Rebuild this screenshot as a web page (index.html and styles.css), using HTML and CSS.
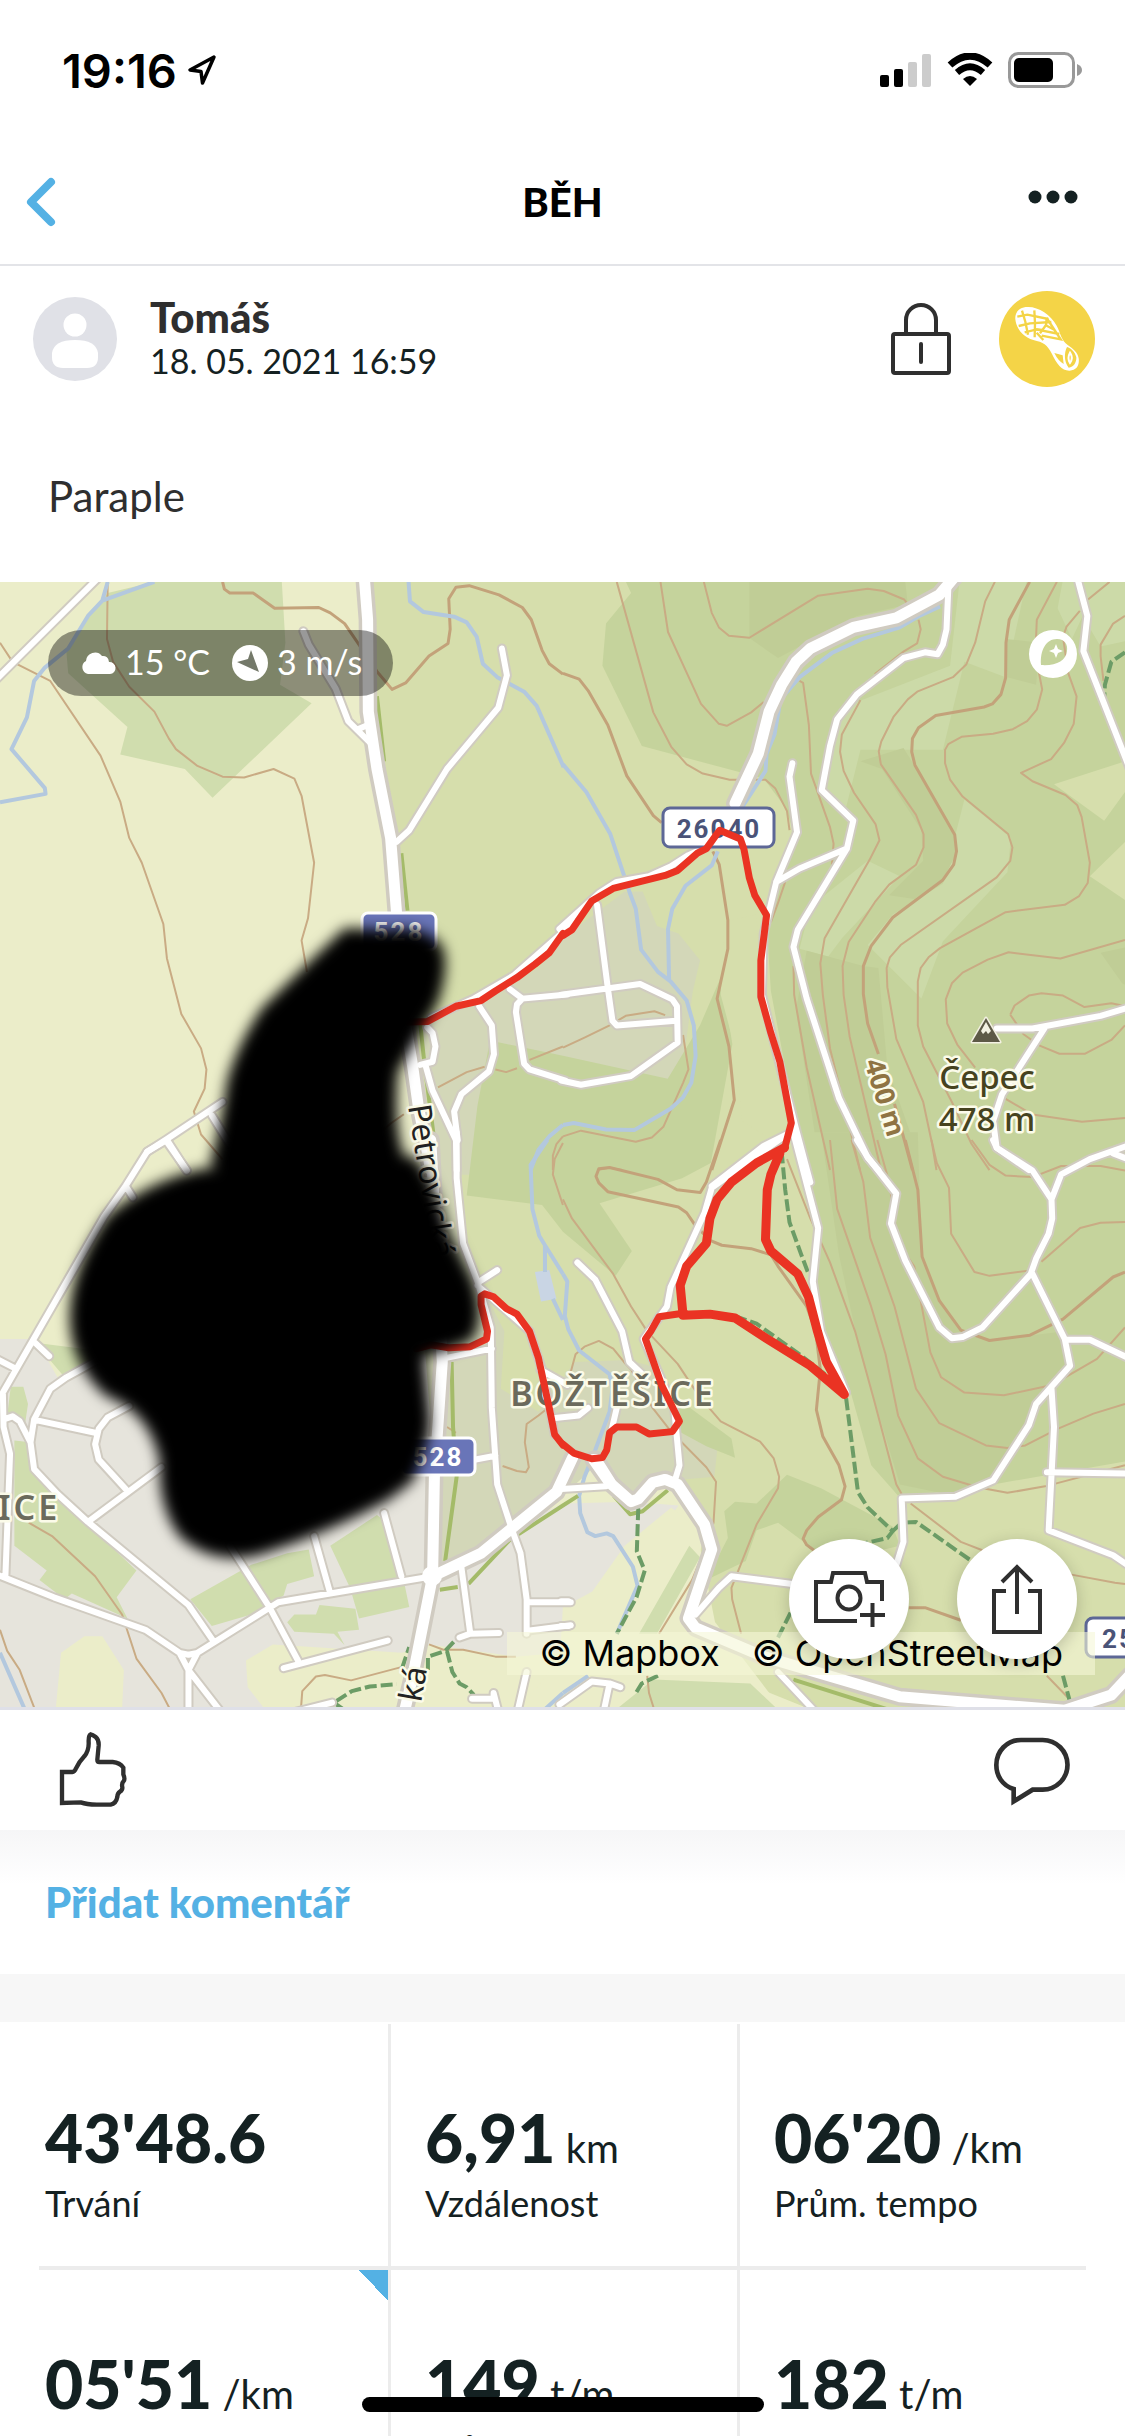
FILE: index.html
```html
<!DOCTYPE html>
<html lang="cs">

<head>
<meta charset="UTF-8">
<meta name="viewport" content="width=device-width, initial-scale=1">
<title>Běh</title>
<link rel="stylesheet" href="styles.css">
</head>

<body>
<div class="statusbar">
  <div class="clock">
    <span>19:16</span>
    <svg width="30" height="32" viewBox="0 0 30 32"><path d="M27 3 L3 16 L14 17.500 L15.500 29Z" fill="none" stroke="#000" stroke-width="3.500" stroke-linejoin="round"/></svg>
  </div>
  <div class="indicators">
    <svg width="52" height="34" viewBox="0 0 52 34">
      <rect x="0" y="22" width="9" height="12" rx="2"/>
      <rect x="14" y="16" width="9" height="18" rx="2"/>
      <rect x="28" y="9" width="9" height="25" rx="2" fill="#ccc"/>
      <rect x="42" y="1" width="9" height="33" rx="2" fill="#ccc"/>
    </svg>
    <svg width="46" height="34" viewBox="0 0 46 34">
      <path d="M3 12 Q23 -6 43 12" fill="none" stroke="#000" stroke-width="7"/>
      <path d="M10 19.500 Q23 8 36 19.500" fill="none" stroke="#000" stroke-width="6.500"/>
      <path d="M16 26 Q23 20 30 26 L23 33Z"/>
    </svg>
    <svg width="75" height="36" viewBox="0 0 75 36">
      <rect x="1.500" y="1.500" width="64" height="33" rx="9" fill="none" stroke="#999" stroke-width="3"/>
      <path d="M69 12 Q74 14 74 18 T69 24Z" fill="#999"/>
      <rect x="6" y="6" width="39" height="24" rx="5"/>
    </svg>
  </div>
</div>

<header class="navbar">
  <button class="nav-btn" aria-label="Zpět">
    <svg width="30" height="50" viewBox="0 0 30 50"><path d="M25 5 L5 25 L25 45" fill="none" stroke="#54b1e4" stroke-width="8" stroke-linecap="round" stroke-linejoin="round"/></svg>
  </button>
  <h1 class="title">BĚH</h1>
  <button class="nav-btn nav-more" aria-label="Více">
    <svg width="50" height="26" viewBox="0 0 50 26"><g fill="#142122"><circle cx="7" cy="8" r="6.500"/><circle cx="25" cy="8" r="6.500"/><circle cx="43" cy="8" r="6.500"/></g></svg>
  </button>
</header>

<section class="profile">
  <svg width="84" height="84" viewBox="0 0 84 84">
    <circle cx="42" cy="42" r="42" fill="#e0e1e7"/>
    <circle cx="42" cy="28" r="11.500" fill="#fff"/>
    <path d="M19 56 Q21 43 42 43 T65 56 V60 Q65 71 54 71 H30 Q19 71 19 60Z" fill="#fff"/>
  </svg>
  <div class="who">
    <div class="name">Tomáš</div>
    <div class="date">18. 05. 2021 16:59</div>
  </div>
  <svg width="60" height="72" viewBox="0 0 60 72">
    <g fill="none" stroke="#2f2f2f" stroke-width="4">
      <rect x="2" y="31" width="56" height="39" rx="2"/>
      <path d="M15 31 V17 A15 15 0 0 1 45 17 V31"/>
      <path d="M30 41 V59" stroke-linecap="round"/>
    </g>
  </svg>
  <svg class="sport" width="96" height="96" viewBox="417 33 288 288">
    <circle cx="561" cy="177" r="144" fill="#f4d447"/>
    <path fill="#fff" d="M503 81 C480 81 464 95 466 118 C469 148 492 172 520 180 C550 187 562 194 576 222 C590 252 606 273 629 272 C650 271 659 255 656 235 C653 216 638 206 624 196 C603 180 602 160 590 137 C572 104 535 80 503 81Z"/>
    <g fill="none" stroke="#f4d447" stroke-width="7">
      <path d="M486 92 L496 125 L504 164 M523 91 L525 130 L524 172 M560 114 L558 135 L540 160"/>
      <path d="M472 110 L502 104 L565 117 M476 138 L510 130 L574 126 M494 157 L530 148 L548 150"/>
      <path d="M560 114 L602 178 L545 167 M528 148 L598 162 M556 135 L584 150 M530 158 L550 180"/>
    </g>
    <path fill="#f4d447" d="M583 219 L608 226 L611 252 Q594 242 583 219Z M621 201 C633 205 644 214 649 232 C650 246 641 263 626 263 C612 245 612 218 621 201Z"/>
    <path fill="none" stroke="#fff" stroke-width="6" d="M630 218 Q621 234 630 249 Q641 234 630 218Z"/>
  </svg>
</section>

<p class="note">Paraple</p>

<section class="map">
<svg class="map-art" viewBox="0 0 1125 1125">
<defs>
  <filter id="soft" x="-20%" y="-20%" width="140%" height="140%"><feGaussianBlur stdDeviation="7"/></filter>
  <g id="main-roads">
    <path transform="translate(0 -12) scale(.359 .3827)" d="M1014 10 L1024 130 1026 370 1050 520 1088 700 1105 900 1115 1100 1150 1300 1165 1400 1200 1568"/>
    <path transform="translate(0 558) scale(.359 .3827)" d="M1200 0 L1232 580 1210 880 1205 1140 1150 1400 1125 1500 M1205 1140 L1340 1080 1425 1015 1550 920 1595 830 M1660 835 L1700 895"/>
    <path transform="translate(563 -12) scale(.3584 .3827)" d="M1100 10 L1050 65 930 125 810 150 690 205 650 240 610 300 575 370 545 480 480 610"/>
    <path transform="translate(563 558) scale(.3584 .3827)" d="M85 835 L130 895 190 945 210 938 250 895 285 887 320 900 395 1005 415 1070 350 1250 370 1275 560 1350 940 1455 1400 1490 1530 1450 1580 1400"/>
  </g>
  <g id="side-roads">
    <path transform="translate(0 -12) scale(.359 .3827)" d="M1600 920 L1430 1060 1320 1120 1200 1170 M1398 205 L1412 275 1388 360 1245 520 1140 680 1105 710 M845 160 L860 195 935 310 970 395 1035 455 M1000 415 L1025 405 M285 10 L-20 295 M1580 1109 L1455 1120 1440 1135 1437 1155 1460 1290 1475 1305 1575 1334 M1455 1120 L1420 1095 M1335 1140 L1370 1190 1376 1265 1362 1310 1285 1370 1265 1415 1275 1490 M1190 1195 L1205 1210 1213 1245 1205 1285 1170 1293 M1185 1293 L1205 1360 1270 1490 1272 1568 M620 1390 L465 1487 410 1520 M465 1495 L520 1568 M590 1425 L640 1500"/>
    <path transform="translate(0 558) scale(.359 .3827)" d="M465 0 L410 30 350 120 290 200 8 660 10 750 28 820 15 1140 M465 0 L520 80 M350 120 L370 150 M98 530 L137 565 M-10 572 L45 598 M10 730 L35 722 55 735 85 790 95 860 160 925 245 998 525 1215 595 1310 M85 790 L95 730 140 650 185 620 360 530 M100 732 L265 765 M360 695 L300 725 275 755 265 795 275 835 350 912 M245 998 L450 855 M-10 1135 L150 1195 405 1280 500 1340 525 1345 550 1340 775 1208 1205 1140 M500 1340 L525 1385 V1500 M550 1340 L525 1385 620 1500 M640 1060 L750 1220 830 1360 M790 1380 L1080 1308 M875 1035 L920 1185 M1070 975 L1118 1140 M1272 -20 V100 L1290 270 1330 370 1367 490 1370 700 1385 900 1425 1015 1450 1080 1467 1200 V1290 M1335 370 L1385 340 M1330 380 L1475 500 1510 600 1545 770 M1240 570 L1370 545 M1325 835 L1380 825 M1285 1115 L1310 1290 M1280 1300 L1310 1290 1390 1288 M1467 1208 H1590 M1470 1282 L1590 1268 M1467 1390 L1440 1500 M1315 1460 H1375 V1445 L1390 1500 M820 1495 L925 1470 M1505 600 L1580 640 M1540 727 L1612 720 1638 700"/>
    <path transform="translate(563 -12) scale(.3584 .3827)" d="M420 715 L350 745 300 775 240 800 150 815 100 845 -10 938 M1075 50 L1070 155 1060 195 1045 220 1010 215 950 230 820 325 765 390 745 460 722 575 810 655 792 728 655 940 643 985 680 1120 770 1380 850 1535 880 1568 M640 505 L632 540 653 685 595 815 560 950 555 1110 650 1460 690 1600 M792 728 L660 780 595 815 M1432 10 L1463 120 1452 212 1590 540 M1210 1198 L1310 1198 1500 1165 1590 1140 M1345 1195 L1225 1370 1200 1440 1210 1510 1300 1568 M95 875 L125 1092 138 1178 150 1190 315 1178 M-5 1110 L215 1082 305 1122 318 1140 320 1235 190 1322 50 1345 -5 1334 M645 1465 L560 1505 415 1610"/>
    <path transform="translate(563 558) scale(.3584 .3827)" d="M645 -10 L712 230 697 370 720 500 790 660 M610 -5 L415 125 395 190 300 385 290 435 225 520 310 700 325 850 312 890 M40 320 L90 365 165 500 185 580 230 620 M820 0 L850 45 930 140 915 218 955 315 1050 490 1085 518 1115 515 1170 490 1305 350 1320 310 1355 245 1365 205 1363 155 1390 90 1470 50 1590 10 M1200 0 L1210 20 1310 80 1363 155 M1535 35 L1590 55 M1310 350 L1400 520 1415 590 1320 690 1300 745 1200 890 1095 932 945 937 950 1050 930 1110 M1405 522 H1470 L1590 575 M1363 650 L1370 750 1355 1020 1535 1085 1590 1120 M1350 868 L1590 872 M370 1240 L435 1170 470 1140 640 1160 M-5 912 L120 905 M150 700 L135 760 M-5 1205 H15 M-5 1270 H15 M600 1390 L710 1500 M160 1430 L130 1420 80 1415 -10 1475 M130 1420 L112 1500"/>
  </g>
</defs>

<!-- land cover -->
<rect width="1125" height="1125" fill="#ebedc9"/>
<path class="meadow" d="M363 0 L370 140 392 260 412 470 440 700 440 950 563 870 690 915 715 1040 780 1125 H1125 V0Z"/>
<path class="town" transform="translate(0 558) scale(.359 .3827)" d="M0 520 H100 L160 620 220 580 1200 560 1230 1110 1425 1015 1568 950 1760 945 1890 955 1840 1020 1735 1070 1650 1185 1568 1220 1560 1340 1437 1350 1195 1318 1120 1340 760 1318 685 1360 690 1430 740 1490 H0Z"/>
<path class="park" transform="translate(0 -12) scale(.359 .3827)" d="M300 60 L430 31 H785 L795 190 780 300 868 348 592 595 515 520 335 482 355 410 190 270 185 215 215 160 250 120Z"/>
<path class="estate" transform="translate(0 -12) scale(.359 .3827)" d="M1160 1180 L1400 1090 1500 1040 1568 960 1655 900 1740 840 1790 840 1830 930 1890 950 1950 1020 1930 1100 1900 1310 1860 1380 1785 1390 1568 1330 1365 1310 1310 1580 H1220Z"/>
<g transform="translate(0 558) scale(.359 .3827)">
  <path class="estate" d="M1205 0 H1310 L1285 90 1285 270 1340 380 1405 500 1395 650 1500 710 1600 580 1750 575 1810 590 1900 720 2000 790 1990 880 1870 890 1760 945 1660 850 1568 930 1425 1015 1230 1110 1180 500Z"/>
  <path class="park" d="M30 645 L65 645 78 690 70 740 20 720Z M40 785 L85 790 95 870 240 1000 380 1125 325 1195 355 1250 200 1185 180 1200 110 1150 130 1125 40 1060Z M530 1200 L700 1110 800 1080 860 1070 875 1140 800 1160 790 1190 700 1240 590 1270Z M920 1060 L1050 980 1080 1000 1120 1130 1140 1220 1000 1250 975 1170Z M800 1260 L820 1240 880 1240 890 1215 990 1225 1000 1280 940 1285 960 1320 930 1290 820 1285Z M98 530 L350 560 180 620Z"/>
  <path fill="#ebedc9" d="M170 1340 L235 1297 H285 L345 1385 340 1490 H155Z M1570 1220 L1650 1180 1740 1060 1870 960 1960 1030 1915 1250 1850 1290 H1568Z M1560 1350 L2000 1390 2290 1500 H1440Z"/>
  <path class="park" d="M1820 1410 L2090 1420 2180 1500 H1700Z M1830 1290 L1780 1290 1920 1060 1950 1090Z"/>
  <path fill="#c9d5e4" d="M1490 345 L1530 340 1550 415 1507 422Z"/>
  <path class="forest" d="M1330 -90 L1365 -260 1568 -220 1860 -160 1950 -300 2010 -430 2040 -250 1980 60 1900 100 1670 165 1760 290 1715 355 1568 240 1510 170 1300 145Z"/>
</g>
<g transform="translate(563 -12) scale(.3584 .3827)">
  <path class="forest" d="M160 0 L190 60 120 140 110 250 220 460 340 490 560 545 620 620 650 700 600 800 570 950 580 1100 640 1400 700 1580 H1600 V0Z"/>
  <path class="forest-light" d="M1110 0 L1080 250 820 345 770 400 720 560 790 620 830 470 1060 470 1120 240 1235 280 1300 0Z M1120 600 L1250 700 1240 790 1060 970 1000 1120 850 980 920 900 1060 820Z M690 880 L850 760 940 800 780 960 740 1010 660 990Z M1400 0 H1600 V180 L1500 200 1450 120 1420 180 1380 100Z"/>
  <path class="forest-dark" d="M520 31 H955 L962 90 820 120 690 185 600 230 520 178Z M830 500 L950 465 1000 540 1093 692 1098 740 1060 810 980 860 910 850 1005 760 1000 680 890 520Z M680 995 L838 1035 880 1040 905 1300 1010 1580 H720 L650 1150Z M1235 180 L1330 190 1320 300 1240 280Z M1500 1000 L1600 980 V1100 L1560 1080Z"/>
  <path class="meadow" d="M1370 560 L1568 500 V580 L1510 655Z M1470 800 L1580 700 V870Z M450 920 L540 900 550 1110 600 1300 600 1500 500 1440 480 1250 440 1110Z"/>
</g>
<g transform="translate(563 558) scale(.3584 .3827)">
  <path class="forest" d="M640 -20 L712 230 700 370 730 520 800 650 860 850 940 935 1200 900 1568 840 1600 840 V-20Z M450 970 L480 945 540 950 625 875 720 910 920 1010 940 1060 850 1080 700 1070 600 1000 540 1020 510 1100 400 1150 460 1040Z M280 655 L340 690 470 780 480 830 400 800 320 760Z"/>
  <path class="forest-dark" d="M720 -20 H990 L1000 300 1050 420 1110 497 1190 524 1400 500 1410 590 1300 720 1200 890 1095 930 940 900 830 560 770 300Z"/>
</g>

<g class="contour">
  <path transform="translate(0 -12) scale(.359 .3827)" d="M0 190 L35 240 140 290 280 485 335 605 360 700 395 765 455 925 465 1015 505 1160 560 1250 575 1305 570 1355 540 1415 560 1475 620 1540 M300 31 L298 180 315 240 360 305 430 370 470 440 490 468 550 512 620 540 680 542 762 520 820 545 840 590 875 765 858 910 840 968 855 1050 M1220 1352 L1300 1312 1350 1298 M1380 1305 L1410 1312 1440 1302 M1475 1280 L1568 1245 M1000 1490 L1035 1488 1090 1445 1125 1422 M1568 1480 L1550 1500 1540 1530 1540 1568"/>
  <path transform="translate(563 -12) scale(.3584 .3827)" d="M150 31 L252 372 302 462 345 508 390 532 465 548 565 548 592 570 625 630 632 680 M272 31 L293 162 385 350 435 402 457 407 525 372 560 345 M393 31 L415 112 435 150 463 172 520 177 712 67 850 49 895 55 952 77 962 90 M992 130 L998 155 988 192 952 212 870 272 M660 290 L670 295 686 405 692 532 745 672 755 715 750 770 M620 815 L600 870 580 920 M830 340 L778 430 773 475 783 525 812 582 872 664 883 706 855 758 730 962 718 1028 725 1110 745 1250 829 1568 M1205 31 L1178 82 1150 190 1125 247 1088 280 990 317 962 338 922 384 888 448 881 474 887 508 985 640 1006 690 1006 725 985 770 910 822 870 868 797 972 780 1035 783 1110 800 1220 870 1500 887 1568 M1378 31 L1322 130 1318 220 1337 312 1322 365 1295 395 1255 416 1200 428 1112 436 1075 455 1066 470 1066 505 1080 548 1115 592 1242 690 1254 725 1248 760 1210 803 942 980 912 1012 903 1040 905 1090 930 1225 1005 1390 1030 1500 1042 1568 M1525 31 L1465 77 M1442 107 L1405 148 1395 175 1410 270 1433 330 1425 402 1398 452 1362 494 1278 530 1310 552 1402 588 1435 615 1447 645 1470 765 1464 818 1440 852 1400 875 1235 894 1052 988 1020 1012 998 1040 990 1075 990 1190 1005 1245 1085 1390 1140 1500 1190 1568 M1568 120 L1535 140 1500 195 1500 225 1508 290 M1568 967 L1388 1015 1243 999 1185 1018 1115 1052 1085 1080 1068 1122 1072 1185 1100 1240 1150 1300 M1235 1382 L1310 1423 1448 1442 1568 1432 M1248 1162 L1260 1138 1300 1112 1335 1106 1395 1112 1455 1142 1530 1132 1560 1138 M1568 1190 L1530 1228 1457 1264 1385 1264 1330 1243 1285 1213 1248 1162 M643 1035 L645 1110 680 1300 745 1568 M0 1248 L60 1222 130 1190 175 1165 255 1153 285 1163 M335 1215 L350 1305 335 1340 280 1455 248 1483 203 1494 50 1465 0 1480 M95 1568 L130 1562 165 1568"/>
  <path transform="translate(0 558) scale(.359 .3827)" d="M80 1000 L145 1035 265 1140 340 1240 380 1355 450 1445 475 1490 M0 1280 L20 1335 55 1385 98 1490 M838 1490 L842 1440 880 1402 905 1398 978 1412 1115 1378 M1195 1318 L1235 1332 1290 1332 1380 1350 1437 1350 M1520 705 L1500 720 1467 742 1462 790 1473 855 1465 868 1440 865 1400 852 M1568 8 L1545 50 1540 90 1568 170 M1245 750 L1270 765"/>
  <path transform="translate(563 558) scale(.3584 .3827)" d="M0 155 L25 205 140 350 190 435 235 500 320 585 380 670 440 735 550 788 588 832 603 880 600 910 540 1005 470 1170 472 1200 497 1290 M22 605 L35 560 60 540 100 525 140 545 170 580 190 600 250 700 300 760 400 855 427 893 420 1000 400 1060 360 1150 268 1290 M625 50 L690 205 745 320 815 500 868 680 930 900 945 925 M745 0 L765 180 858 430 900 560 935 720 990 832 1060 880 1160 908 1240 922 1345 905 1568 850 M805 0 L838 110 857 255 925 435 985 650 1050 740 1180 798 1240 805 1290 798 1380 755 1480 715 1568 690 M877 0 L910 110 935 270 980 330 1025 555 1055 620 1120 660 1230 667 1365 640 1490 572 1568 490 M1028 0 L1043 60 1077 125 1083 245 1148 345 1190 355 1310 340 M1335 318 L1443 230 1500 216 1568 214 M1140 0 L1190 65 1235 93 1310 97 1390 68 1500 68 1568 80 M970 950 L1110 1050 1170 1072 M1415 1135 L1540 1157 1568 1160 M235 1400 L240 1445 255 1490 M1350 1400 L1410 1458"/>
</g>
<g class="contour index">
  <path transform="translate(0 -12) scale(.359 .3827)" d="M620 31 L625 50 640 60 705 60 765 100 888 98 920 112 960 140 1000 195 1050 265 1092 312 1130 295 1195 225 1248 192 1254 155 1250 75 1270 45 1307 41 1390 65 1455 98 1480 130 1510 210 1530 245 1568 272"/>
  <path transform="translate(563 -12) scale(.3584 .3827)" d="M0 270 L45 285 70 315 125 405 178 538 252 642 275 660 M418 735 L436 770 460 915 460 990 430 1120 463 1245 478 1385 415 1568 M1302 31 L1245 130 1236 190 1235 282 1222 325 1198 350 1175 358 1040 380 992 412 975 440 973 475 982 510 1093 692 1098 735 1090 770 1060 810 920 908 860 982 838 1035 838 1108 850 1185 880 1265 M925 1395 L975 1568"/>
  <path transform="translate(563 558) scale(.3584 .3827)" d="M440 0 L400 110 383 137 318 130 265 103 130 72 100 75 92 95 100 112 125 135 322 175 345 190 368 222 410 262 443 275 525 284 580 300 600 330 680 435 705 500 718 600 707 705 725 775 770 850 787 905 777 940 712 985 680 1020 670 1042 680 1058 700 1072 M955 0 L990 130 1002 305 1050 420 1110 497 1190 524 1303 510 1395 468 1535 358 1568 345 M965 1222 L1010 1222 1110 1255"/>
</g>

<g class="water">
  <path transform="translate(0 -12) scale(.359 .3827)" d="M300 31 L285 80 245 120 190 205 125 255 95 290 75 385 32 468 125 570 127 585 0 607 M430 31 L285 80 M1138 31 L1142 82 1180 110 1265 122 1300 137 1328 175 1345 245 1385 280 1460 318 1495 355 1570 515 M1568 1450 L1530 1480 1500 1515 1478 1568"/>
  <path transform="translate(563 -12) scale(.3584 .3827)" d="M0 508 L65 580 132 690 185 840 203 885 218 992 265 1050 300 1075 345 1125 365 1190 370 1270 358 1340 335 1378 300 1408 200 1463 120 1462 30 1445 0 1450 M1052 95 L990 122 940 150 835 180 750 217 660 280 610 335 605 350 590 430 568 480 565 525 500 620 M432 735 L415 772 342 825 305 885 293 938 296 1070"/>
  <path transform="translate(0 558) scale(.359 .3827)" d="M1525 0 L1478 65 1483 180 1502 250 1518 275 1568 350 M1518 275 V345 M1540 415 L1568 470 M0 1340 L70 1490 M1515 1490 L1568 1445"/>
  <path transform="translate(563 558) scale(.3584 .3827)" d="M0 350 L12 370 5 460 15 495 45 550 130 612 138 650 130 710 90 810 60 880 45 930 48 975 68 1025 90 1035 122 1028 140 1035 195 1115 208 1165 150 1290 M0 1445 L70 1400"/>
</g>

<g class="verge">
  <path transform="translate(0 -12) scale(.359 .3827)" d="M1050 330 L1070 500 M1118 740 L1135 890 M1170 1180 L1180 1270 1220 1568"/>
  <path transform="translate(0 558) scale(.359 .3827)" d="M1258 580 L1262 750 1272 880 1240 1100 M1225 1175 L1275 1168 M1305 1160 L1420 1045 1568 955 1610 930 M1710 930 L1755 978 1790 970 1860 915 M2210 1410 L2480 1490"/>
</g>
<g class="trail">
  <path transform="translate(563 -12) scale(.3584 .3827)" d="M1568 215 L1530 240 1512 300 1510 335"/>
  <path transform="translate(563 558) scale(.3584 .3827)" d="M610 30 L620 130 632 215 665 300 685 350 M480 460 L540 480 660 560 755 630 M790 675 L823 920 850 960 920 1022 905 1040 845 1053 M920 1022 L945 1000 985 998 1140 1100 M210 962 L206 1075 228 1125 205 1195 150 1290 M635 1235 L600 1300 M1395 1400 L1418 1480 M265 1400 L220 1420 200 1450"/>
  <path transform="translate(0 558) scale(.359 .3827)" d="M960 1490 L930 1470 980 1440 1030 1428 1105 1422 M1120 1380 L1140 1325 M1192 1385 V1350 L1240 1335 1270 1305 M1245 1335 L1260 1390 1280 1420 1300 1430 1320 1450"/>
</g>

<use href="#side-roads" class="road side-casing"/>
<use href="#main-roads" class="road main-casing"/>
<use href="#side-roads" class="road side-fill"/>
<use href="#main-roads" class="road main-fill"/>
<circle cx="432" cy="994" r="10" fill="#fff"/>

<!-- road shields and place names -->
<g class="shield">
  <rect x="362" y="331" width="74" height="37" rx="6"/><text x="399" y="359">528</text>
  <rect x="401" y="856" width="74" height="37" rx="6"/><text x="438" y="884">528</text>
</g>
<g class="shield shield-local">
  <rect x="663" y="226" width="111" height="39" rx="7"/><text x="719" y="256">26040</text>
  <rect x="1086" y="1036" width="90" height="39" rx="7"/><text x="1119" y="1066">25</text>
</g>
<g class="label">
  <path d="M986 436 L1000 460 H972Z" fill="#5d5946" stroke="#f3f1e2" stroke-width="3" stroke-linejoin="round" paint-order="stroke"/>
  <path d="M986 440 L991 449 L988 452 L986 449 L983 452 L981 449Z" fill="#f3f1e2"/>
  <text class="peak" x="987" y="507">Čepec</text>
  <text class="peak" x="987" y="549">478 m</text>
  <text class="height" transform="translate(876 518) rotate(73)">400 m</text>
  <text class="place" x="613" y="824">BOŽTĚŠICE</text>
  <text class="place" x="29" y="938">ICE</text>
  <text class="street" transform="translate(408 524) rotate(81)">Petrovická</text>
  <text class="street" transform="translate(421 1121) rotate(-80)">ká</text>
</g>

<g class="track">
  <path transform="translate(0 -12) scale(.359 .3827)" d="M1110 1182 L1190 1180 1270 1140 1340 1125 1380 1100 1440 1065 1490 1030 1530 1000 1568 950"/>
  <path transform="translate(563 -12) scale(.3584 .3827)" d="M0 955 L25 940 80 865 140 832 285 798 320 785 375 740 400 728 437 680 495 703 505 730 520 805 535 850 568 902 552 1020 552 1115 580 1210 605 1285 612 1320 637 1445 618 1512"/>
  <path transform="translate(0 558) scale(.359 .3827)" d="M1160 545 L1200 535 1250 543 1310 540 1355 520 1358 500 1340 430 1340 408 1350 402 1375 410 1410 440 1440 455 1475 500 1500 570 1530 700 1545 770 1568 797"/>
  <path transform="translate(563 558) scale(.3584 .3827)" d="M340 452 L268 462 245 500 230 520 275 640 325 735 305 762 240 768 205 750 150 750 130 765 122 810 110 830 80 833 30 818 0 795"/>
  <path class="twice" transform="translate(563 558) scale(.3584 .3827)" d="M618 20 L540 60 470 110 430 155 410 205 400 270 345 330 327 380 335 458 410 455 480 465 570 520 690 590 785 665 735 580 710 500 685 410 655 350 580 290 565 260 570 130 580 90 605 35"/>
</g>

<g filter="url(#soft)">
  <path d="M345 346 Q309 380 262 426 Q236 465 227 500 Q222 540 210 582 L300 640 412 590 Q392 560 398 490 Q420 452 438 420 Q450 384 442 364 Q425 342 388 348Z"/>
  <path d="M201 587 Q146 600 107 634 Q68 690 70 740 Q72 784 106 814 Q150 830 160 880 Q158 925 180 955 Q215 985 262 972 Q330 950 388 918 L412 900 Q432 860 430 834 L424 775 Q450 768 472 758 Q486 735 473 698 L448 648 Q436 600 414 574Z"/>
</g>
</svg>

  <div class="weather">
    <svg width="35" height="24" viewBox="0 0 35 24"><path fill="#fff" d="M7 23 A7 7 0 0 1 5 10 A9 9 0 0 1 21 5 A6 6 0 0 1 28 11 A6 6 0 0 1 29 23Z"/></svg>
    <span>15 °C</span>
    <svg class="wind" width="36" height="36" viewBox="0 0 36 36"><circle cx="18" cy="18" r="18" fill="#fff"/><path fill="#74796a" d="M19 5 L27 27 L5 17 L16 14Z"/></svg>
    <span>3 m/s</span>
  </div>

  <svg class="compass" width="48" height="48" viewBox="0 0 48 48">
    <path fill="#fff" fill-rule="evenodd" d="M24 0 A24 24 0 1 1 24 48 A24 24 0 1 1 24 0Z M12 35 C11 20 17 9 28 9 C36 9 39 15 38 21 C37 31 27 36 12 35Z"/>
    <path fill="#fff" d="M27 14 L29 19 L34 21 L29 23 L27 28 L25 23 L20 21 L25 19Z"/>
  </svg>

  <div class="attribution">
    <a href="#mapbox">© Mapbox</a>
    <a href="#osm">© OpenStreetMap</a>
  </div>

  <div class="map-actions">
    <button class="round" aria-label="Přidat fotku">
      <svg width="72" height="60" viewBox="0 0 72 60">
        <g fill="none" stroke="#2f2f2f" stroke-width="4">
          <path d="M44 52 H3 V13 H18 L20 4 H52 L54 13 H69 V32"/>
          <circle cx="36" cy="29" r="11.500"/>
          <path d="M47 46 H72 M59.500 34 V58"/>
        </g>
      </svg>
    </button>
    <button class="round" aria-label="Sdílet">
      <svg width="56" height="72" viewBox="0 0 56 72">
        <g fill="none" stroke="#2f2f2f" stroke-width="4">
          <path d="M17 28 H5 V69 H51 V28 H39"/>
          <path d="M28 51 V5 M13 19 L28 4 L43 19"/>
        </g>
      </svg>
    </button>
  </div>
</section>

<section class="actions">
  <button aria-label="To se mi líbí">
    <svg width="110" height="110" viewBox="0 0 330 330"><path fill="none" stroke="#2f2f2f" stroke-width="13" d="M66 264 V171 H97 Q104 171 108 160 Q116 142 133 124 Q147 106 146 82 Q145 60 152 58 Q158 59 167 66 Q177 74 176 92 L172 134 Q172 141 178 141 H218 Q240 143 250 158 V178 Q256 192 251 198 Q244 205 247 217 Q248 225 240 230 Q232 235 232 246 Q228 266 212 269 H170 Q140 268 122 262Z"/></svg>
  </button>
  <button aria-label="Komentáře">
    <svg width="120" height="110" viewBox="0 0 360 330"><path fill="none" stroke="#2f2f2f" stroke-width="14" d="M138 75 H203 A74 74 0 0 1 203 224 H173 L116 259 V222 C82 212 64 182 64 150 C64 108 96 75 138 75Z"/></svg>
  </button>
</section>

<section class="comments">
  <a href="#comment">Přidat komentář</a>
</section>

<section class="stats">
  <div class="stat">
    <div class="value"><b>43'48.6</b></div>
    <div class="caption">Trvání</div>
  </div>
  <div class="stat">
    <div class="value"><b>6,91</b> km</div>
    <div class="caption">Vzdálenost</div>
  </div>
  <div class="stat">
    <div class="value"><b>06'20</b> /km</div>
    <div class="caption">Prům. tempo</div>
  </div>
  <div class="stat marked">
    <div class="value"><b>05'51</b> /km</div>
    <div class="caption">Max. tempo</div>
  </div>
  <div class="stat">
    <div class="value"><b>149</b> t/m</div>
    <div class="caption">Průměrný tep</div>
  </div>
  <div class="stat">
    <div class="value"><b>182</b> t/m</div>
    <div class="caption">Maximální tep</div>
  </div>
</section>

<div class="home-indicator"></div>
</body>

</html>
```
FILE: styles.css
```css
*{
  box-sizing: border-box;
}

html, body{
  margin: 0;
  padding: 0;
  background: #fff;
  color: #142122;
  font-family: Lato, "Open Sans", sans-serif;
}

html{
  scrollbar-width: none;
}

button{
  padding: 0;
  border: 0;
  background: none;
}

a{
  text-decoration: none;
}

svg{
  display: block;
  flex: none;
}

/* top bars */
.statusbar{
  display: flex;
  justify-content: space-between;
  align-items: center;
  height: 140px;
  padding: 0 42px 0 62px;
}

.clock, .indicators{
  display: flex;
  align-items: center;
}

.clock{
  gap: 10px;
  font: 600 47px Inter, sans-serif;
  color: #000;
}

.indicators{
  gap: 15px;
}

.navbar{
  display: grid;
  grid-template-columns: 1fr auto 1fr;
  align-items: center;
  height: 126px;
  padding: 0 47px 0 26px;
  border-bottom: 2px solid #e3e4e8;
}

.nav-btn{
  justify-self: start;
}

.nav-more{
  justify-self: end;
}

.title{
  margin: 0;
  padding-left: 21px;
  font-size: 40px;
  line-height: 48px;
  font-weight: 900;
  color: #000;
}

/* who and when */
.profile{
  display: flex;
  align-items: center;
  height: 146px;
  padding: 0 30px 0 33px;
}

.who{
  flex: 1;
  padding-left: 33px;
  line-height: 44px;
}

.name{
  font-size: 42px;
  font-weight: 900;
  color: #2f2f2f;
}

.date{
  font-size: 34px;
}

.sport{
  margin-left: 48px;
}

.note{
  margin: 0;
  padding: 60px 48px 62px;
  font-size: 42px;
  line-height: 48px;
  color: #2f2f2f;
}

/* map */
.map{
  position: relative;
  border-bottom: 3px solid #dfe0e8;
}

.map-art{
  width: 100%;
  height: auto;
}

.map-art path{
  vector-effect: non-scaling-stroke;
}

.meadow{ fill: #d6deac; }
.forest{ fill: #c5d39c; }
.forest-light{ fill: #ccdaa8; }
.forest-dark{ fill: #c0cd96; }
.park{ fill: #d0ddae; }
.town{ fill: #e6e4dc; }
.estate{ fill: #d3d7b8; }

.contour, .water, .verge, .trail, .road, .track{
  fill: none;
  stroke-linejoin: round;
}

.contour{
  stroke: #c9ab84;
  stroke-width: 2px;
}

.index{
  stroke: #c3a27a;
  stroke-width: 3px;
}

.water{
  stroke: #b3c8de;
  stroke-width: 4px;
}

.verge{
  stroke: #a4bb69;
  stroke-width: 4px;
}

.trail{
  stroke: #6c9c66;
  stroke-width: 4px;
  stroke-dasharray: 12px 4px;
}

.road{
  stroke: #fff;
  stroke-linecap: round;
}

.side-casing{
  stroke: #d0cbc1;
  stroke-width: 10px;
}

.main-casing{
  stroke: #d0cbc1;
  stroke-width: 18px;
}

.side-fill{ stroke-width: 6px; }
.main-fill{ stroke-width: 11px; }

.track{
  stroke: #ea3323;
  stroke-width: 7px;
  stroke-linecap: round;
}

.twice{
  stroke-width: 9px;
}

.shield rect{
  fill: #6975b8;
  stroke: #fff;
  stroke-width: 3px;
}

.shield text{
  font: 700 26px Roboto, sans-serif;
  fill: #fff;
  text-anchor: middle;
  letter-spacing: 2px;
}

.shield-local rect{
  fill: #fff;
  stroke: #5d6796;
}

.shield-local text{
  fill: #4a5378;
}

.label text{
  font-family: "Noto Sans", sans-serif;
  stroke: #fbfbe9;
  stroke-width: 5px;
  stroke-linejoin: round;
  paint-order: stroke;
}

.peak{
  font-size: 33px;
  font-weight: 500;
  fill: #46431f;
  text-anchor: middle;
}

.height{
  font-size: 27px;
  font-weight: 700;
  fill: #8f7343;
  text-anchor: middle;
}

.place{
  font-size: 34px;
  font-weight: 600;
  letter-spacing: 3px;
  fill: #6b6a5c;
  text-anchor: middle;
}

.street{
  font-size: 32px;
  fill: #222;
}

.weather{
  position: absolute;
  top: 48px;
  left: 48px;
  display: flex;
  align-items: center;
  height: 66px;
  padding: 0 31px 0 33px;
  border-radius: 33px;
  background: rgba(0, 0, 0, .4);
  color: #fff;
  font-size: 34px;
  line-height: 40px;
}

.weather span{
  padding: 0 0 2px 9px;
}

.wind{
  margin-left: 22px;
}

.compass{
  position: absolute;
  top: 48px;
  right: 48px;
}

.attribution{
  position: absolute;
  right: 30px;
  bottom: 32px;
  display: flex;
  gap: 32px;
  padding: 0 32px;
  background: rgba(245, 247, 215, .6);
  font: 36px/43px Inter, sans-serif;
}

.attribution a{
  color: #000;
}

.map-actions{
  position: absolute;
  right: 48px;
  bottom: 48px;
  display: flex;
  gap: 48px;
}

.round{
  display: grid;
  place-items: center;
  width: 120px;
  height: 120px;
  border-radius: 50%;
  background: #fff;
  box-shadow: 0 4px 16px rgba(0, 0, 0, .2);
}

/* likes and comments */
.actions{
  display: flex;
  justify-content: space-between;
  align-items: center;
  height: 120px;
  padding: 0 30px 0 40px;
}

.comments{
  padding: 48px 45px;
  background: linear-gradient(#f6f6f7, #fff 54px);
  font-size: 42px;
  line-height: 48px;
  font-weight: 900;
}

.comments a{
  color: #54b1e4;
}

/* summary grid */
.stats{
  display: grid;
  grid-template-columns: repeat(3, 1fr);
  padding: 2px 39px 0;
  border-top: 48px solid #f7f7f7;
}

.stat{
  height: 246px;
  padding: 80px 0 0 34px;
  border-bottom: 4px solid #ececec;
  border-left: 3px solid #ececec;
  white-space: nowrap;
}

.stat:nth-child(3n + 1){
  padding-left: 6px;
  border-left: 0;
}

/* blue corner */
.marked{
  background: linear-gradient(45deg, transparent 50%, #54b1e4 50%) top right / 30px 30px no-repeat;
}

.value{
  font-size: 40px;
  line-height: 68px;
}

.value b{
  font-size: 66px;
  font-weight: 900;
}

.caption{
  font-size: 36px;
  line-height: 42px;
}

.home-indicator{
  position: fixed;
  left: 50%;
  bottom: 24px;
  width: 402px;
  height: 15px;
  margin-left: -201px;
  border-radius: 8px;
  background: #000;
}
```
